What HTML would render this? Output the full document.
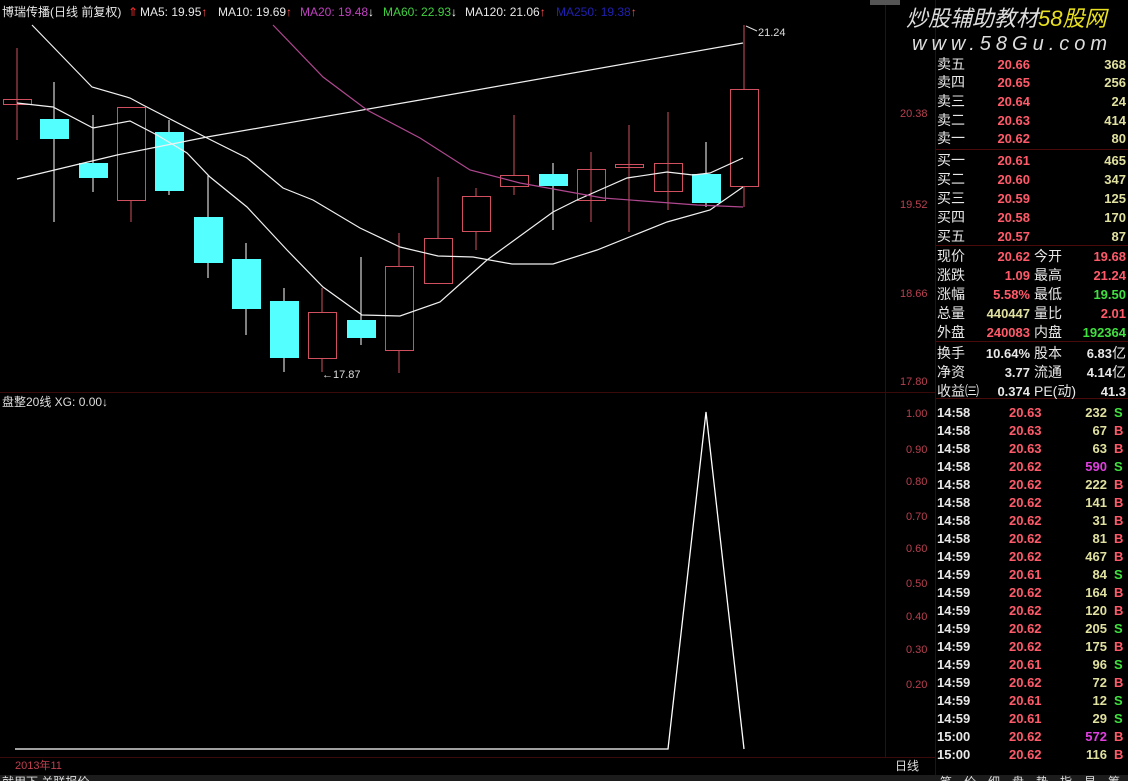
<!DOCTYPE html>
<html><head><meta charset="utf-8"><style>
html,body{margin:0;padding:0;background:#000;width:1128px;height:781px;overflow:hidden}
svg{display:block}
text{font-family:"Liberation Sans","Noto Sans CJK SC",sans-serif}
.r{fill:#ff5a6a}.w{fill:#e8e8e8}.y{fill:#e0e0a0}.g{fill:#40e040}.m{fill:#e040e0}.ax{fill:#b84050;font-size:11px}
</style></head><body>
<svg width="1128" height="781" xmlns="http://www.w3.org/2000/svg">
<rect width="1128" height="781" fill="#000"/>
<!-- frame lines -->
<line x1="885.5" y1="0" x2="885.5" y2="757" stroke="#3a0a0a"/>
<line x1="935.5" y1="0" x2="935.5" y2="781" stroke="#3a0a0a"/>
<line x1="0" y1="392.5" x2="935" y2="392.5" stroke="#3a0a0a"/>
<line x1="0" y1="757.5" x2="935" y2="757.5" stroke="#3a0a0a"/>
<rect x="870" y="0" width="30" height="5" fill="#555"/>
<!-- header -->
<g font-size="12">
<text x="2" y="16" class="w">博瑞传播(日线 前复权)</text>
<text x="128" y="16" fill="#ff3030">⇑</text>
<text x="140" y="16" class="w">MA5: 19.95<tspan fill="#ff5050">↑</tspan></text>
<text x="218" y="16" class="w">MA10: 19.69<tspan fill="#ff5050">↑</tspan></text>
<text x="300" y="16" fill="#c040c0">MA20: 19.48<tspan fill="#fff">↓</tspan></text>
<text x="383" y="16" fill="#40d040">MA60: 22.93<tspan fill="#fff">↓</tspan></text>
<text x="465" y="16" class="w">MA120: 21.06<tspan fill="#ff5050">↑</tspan></text>
<text x="556" y="16" fill="#2020b0">MA250: 19.38<tspan fill="#ff5050">↑</tspan></text>
</g>
<!-- axis labels -->
<text x="900" y="117" class="ax">20.38</text>
<text x="900" y="208" class="ax">19.52</text>
<text x="900" y="297" class="ax">18.66</text>
<text x="900" y="385" class="ax">17.80</text>
<!-- candles -->
<g stroke-width="1" shape-rendering="crispEdges">
<line x1="17" y1="48" x2="17" y2="140" stroke="#d05060"/><rect x="3.5" y="99.5" width="28" height="5" fill="none" stroke="#d05060"/>
<line x1="54" y1="82" x2="54" y2="222" stroke="#fff"/><rect x="40" y="119" width="29" height="20" fill="#54ffff"/>
<line x1="93" y1="115" x2="93" y2="192" stroke="#fff"/><rect x="79" y="163" width="29" height="15" fill="#54ffff"/>
<line x1="131" y1="200" x2="131" y2="222" stroke="#d05060"/><rect x="117.5" y="107.5" width="28" height="93" fill="none" stroke="#d05060"/>
<line x1="169" y1="120" x2="169" y2="195" stroke="#fff"/><rect x="155" y="132" width="29" height="59" fill="#54ffff"/>
<line x1="208" y1="175" x2="208" y2="278" stroke="#fff"/><rect x="194" y="217" width="29" height="46" fill="#54ffff"/>
<line x1="246" y1="243" x2="246" y2="335" stroke="#fff"/><rect x="232" y="259" width="29" height="50" fill="#54ffff"/>
<line x1="284" y1="288" x2="284" y2="372" stroke="#fff"/><rect x="270" y="301" width="29" height="57" fill="#54ffff"/>
<line x1="322" y1="288" x2="322" y2="312" stroke="#d05060"/><line x1="322" y1="358" x2="322" y2="372" stroke="#d05060"/><rect x="308.5" y="312.5" width="28" height="46" fill="none" stroke="#d05060"/>
<line x1="361" y1="257" x2="361" y2="345" stroke="#fff"/><rect x="347" y="320" width="29" height="18" fill="#54ffff"/>
<line x1="399" y1="233" x2="399" y2="373" stroke="#d05060"/><rect x="385.5" y="266.5" width="28" height="84" fill="#000" stroke="#d05060"/>
<line x1="438" y1="177" x2="438" y2="238" stroke="#d05060"/><rect x="424.5" y="238.5" width="28" height="45" fill="none" stroke="#d05060"/>
<line x1="476" y1="188" x2="476" y2="250" stroke="#d05060"/><rect x="462.5" y="196.5" width="28" height="35" fill="#000" stroke="#d05060"/>
<line x1="514" y1="115" x2="514" y2="195" stroke="#d05060"/><rect x="500.5" y="175.5" width="28" height="11" fill="#000" stroke="#d05060"/>
<line x1="553" y1="163" x2="553" y2="230" stroke="#fff"/><rect x="539" y="174" width="29" height="12" fill="#54ffff"/>
<line x1="591" y1="152" x2="591" y2="222" stroke="#d05060"/><rect x="577.5" y="169.5" width="28" height="31" fill="none" stroke="#d05060"/>
<line x1="629" y1="125" x2="629" y2="232" stroke="#d05060"/><rect x="615.5" y="164.5" width="28" height="3" fill="none" stroke="#d05060"/>
<line x1="668" y1="112" x2="668" y2="210" stroke="#d05060"/><rect x="654.5" y="163.5" width="28" height="28" fill="none" stroke="#d05060"/>
<line x1="706" y1="142" x2="706" y2="207" stroke="#fff"/><rect x="692" y="174" width="29" height="29" fill="#54ffff"/>
<line x1="744" y1="25" x2="744" y2="89" stroke="#d05060"/><line x1="744" y1="186" x2="744" y2="207" stroke="#d05060"/><rect x="730.5" y="89.5" width="28" height="97" fill="none" stroke="#d05060"/>
</g>
<!-- MA lines -->
<g fill="none" stroke-width="1.2">
<polyline stroke="#f0f0f0" points="17,179 117,155 207,137 420,100 743,43"/>
<polyline stroke="#f0f0f0" points="32,25 92,87 130,98 143,105 207,138 247,158 283,188 313,200 360,228 400,247 438,256 473,257 512,264 553,264 597,250 667,222 710,210 743,187"/>
<polyline stroke="#f0f0f0" points="17,103 53,107 93,128 130,121 157,135 187,153 210,177 247,207 287,250 323,287 362,315 400,316 440,302 487,260 553,212 577,200 627,178 667,172 693,175 710,173 743,158"/>
<polyline stroke="#b04890" points="273,25 323,77 367,110 420,138 470,170 520,183 603,198 697,205 743,207"/>
</g>
<text x="758" y="36" font-size="11" fill="#ddd">21.24</text>
<line x1="746" y1="26" x2="757" y2="31" stroke="#ddd"/>
<text x="322" y="378" font-size="11" fill="#ddd">←17.87</text>
<!-- lower panel -->
<text x="2" y="406" font-size="12" fill="#ddd">盘整20线 XG: 0.00↓</text>
<g class="ax">
<text x="906" y="417">1.00</text><text x="906" y="453">0.90</text><text x="906" y="485">0.80</text><text x="906" y="520">0.70</text><text x="906" y="552">0.60</text><text x="906" y="587">0.50</text><text x="906" y="620">0.40</text><text x="906" y="653">0.30</text><text x="906" y="688">0.20</text>
</g>
<polyline fill="none" stroke="#fff" stroke-width="1.3" points="15,749 668,749 706,412 744,749"/>
<text x="15" y="769" font-size="11" fill="#c04050">2013年11</text>
<text x="895" y="770" font-size="12" fill="#ddd">日线</text>
<rect x="0" y="775" width="1128" height="6" fill="#1c1c1c"/>
<text x="2" y="786" font-size="12" fill="#ddd">就用下 关联报价</text>
<text x="940" y="786" font-size="12" fill="#ddd" letter-spacing="12">笔价细盘势指星筹</text>
<!-- watermark -->
<text x="906" y="26" font-size="22" font-style="italic" fill="#ddd">炒股辅助教材<tspan fill="#e8e020">58股网</tspan></text>
<text x="912" y="50" font-size="20" font-style="italic" fill="#ddd" letter-spacing="5">www.58Gu.com</text>
<!-- order book -->
<g font-size="14">
<g class="w">
<text x="937" y="69">卖五</text><text x="937" y="87">卖四</text><text x="937" y="106">卖三</text><text x="937" y="125">卖二</text><text x="937" y="143">卖一</text>
<text x="937" y="165">买一</text><text x="937" y="184">买二</text><text x="937" y="203">买三</text><text x="937" y="222">买四</text><text x="937" y="241">买五</text>
</g>
<g class="r" text-anchor="end" font-weight="bold" font-size="13">
<text x="1030" y="69">20.66</text><text x="1030" y="87">20.65</text><text x="1030" y="106">20.64</text><text x="1030" y="125">20.63</text><text x="1030" y="143">20.62</text>
<text x="1030" y="165">20.61</text><text x="1030" y="184">20.60</text><text x="1030" y="203">20.59</text><text x="1030" y="222">20.58</text><text x="1030" y="241">20.57</text>
</g>
<g class="y" text-anchor="end" font-weight="bold" font-size="13">
<text x="1126" y="69">368</text><text x="1126" y="87">256</text><text x="1126" y="106">24</text><text x="1126" y="125">414</text><text x="1126" y="143">80</text>
<text x="1126" y="165">465</text><text x="1126" y="184">347</text><text x="1126" y="203">125</text><text x="1126" y="222">170</text><text x="1126" y="241">87</text>
</g>
<line x1="936" y1="149.5" x2="1128" y2="149.5" stroke="#4a0a0a"/>
<line x1="936" y1="245.5" x2="1128" y2="245.5" stroke="#4a0a0a"/>
<line x1="936" y1="341.5" x2="1128" y2="341.5" stroke="#4a0a0a"/>
<line x1="936" y1="398.5" x2="1128" y2="398.5" stroke="#4a0a0a"/>
<g class="w">
<text x="937" y="261">现价</text><text x="937" y="280">涨跌</text><text x="937" y="299">涨幅</text><text x="937" y="318">总量</text><text x="937" y="337">外盘</text>
<text x="937" y="358">换手</text><text x="937" y="377">净资</text><text x="937" y="396">收益㈢</text>
<text x="1034" y="261">今开</text><text x="1034" y="280">最高</text><text x="1034" y="299">最低</text><text x="1034" y="318">量比</text><text x="1034" y="337">内盘</text>
<text x="1034" y="358">股本</text><text x="1034" y="377">流通</text><text x="1034" y="396">PE(动)</text>
</g>
<g text-anchor="end" font-weight="bold" font-size="13">
<text x="1030" y="261" class="r">20.62</text><text x="1030" y="280" class="r">1.09</text><text x="1030" y="299" class="r">5.58%</text><text x="1030" y="318" class="y">440447</text><text x="1030" y="337" class="r">240083</text>
<text x="1030" y="358" class="w">10.64%</text><text x="1030" y="377" class="w">3.77</text><text x="1030" y="396" class="w">0.374</text>
<text x="1126" y="261" class="r">19.68</text><text x="1126" y="280" class="r">21.24</text><text x="1126" y="299" class="g">19.50</text><text x="1126" y="318" class="r">2.01</text><text x="1126" y="337" class="g">192364</text>
<text x="1112" y="358" class="w">6.83</text><text x="1112" y="377" class="w">4.14</text><text x="1126" y="396" class="w">41.3</text>
</g>
<text x="1112" y="358" class="w">亿</text><text x="1112" y="377" class="w">亿</text>
</g>
<!-- ticks -->
<g font-size="13" font-weight="bold">
<g class="w">
<text x="937" y="417">14:58</text><text x="937" y="435">14:58</text><text x="937" y="453">14:58</text><text x="937" y="471">14:58</text><text x="937" y="489">14:58</text><text x="937" y="507">14:58</text><text x="937" y="525">14:58</text><text x="937" y="543">14:58</text><text x="937" y="561">14:59</text><text x="937" y="579">14:59</text><text x="937" y="597">14:59</text><text x="937" y="615">14:59</text><text x="937" y="633">14:59</text><text x="937" y="651">14:59</text><text x="937" y="669">14:59</text><text x="937" y="687">14:59</text><text x="937" y="705">14:59</text><text x="937" y="723">14:59</text><text x="937" y="741">15:00</text><text x="937" y="759">15:00</text>
</g>
<g class="r">
<text x="1009" y="417">20.63</text><text x="1009" y="435">20.63</text><text x="1009" y="453">20.63</text><text x="1009" y="471">20.62</text><text x="1009" y="489">20.62</text><text x="1009" y="507">20.62</text><text x="1009" y="525">20.62</text><text x="1009" y="543">20.62</text><text x="1009" y="561">20.62</text><text x="1009" y="579">20.61</text><text x="1009" y="597">20.62</text><text x="1009" y="615">20.62</text><text x="1009" y="633">20.62</text><text x="1009" y="651">20.62</text><text x="1009" y="669">20.61</text><text x="1009" y="687">20.62</text><text x="1009" y="705">20.61</text><text x="1009" y="723">20.61</text><text x="1009" y="741">20.62</text><text x="1009" y="759">20.62</text>
</g>
<g class="y" text-anchor="end">
<text x="1107" y="417">232</text><text x="1107" y="435">67</text><text x="1107" y="453">63</text><text x="1107" y="471" class="m">590</text><text x="1107" y="489">222</text><text x="1107" y="507">141</text><text x="1107" y="525">31</text><text x="1107" y="543">81</text><text x="1107" y="561">467</text><text x="1107" y="579">84</text><text x="1107" y="597">164</text><text x="1107" y="615">120</text><text x="1107" y="633">205</text><text x="1107" y="651">175</text><text x="1107" y="669">96</text><text x="1107" y="687">72</text><text x="1107" y="705">12</text><text x="1107" y="723">29</text><text x="1107" y="741" class="m">572</text><text x="1107" y="759">116</text>
</g>
<g>
<text x="1114" y="417" class="g">S</text><text x="1114" y="435" class="r">B</text><text x="1114" y="453" class="r">B</text><text x="1114" y="471" class="g">S</text><text x="1114" y="489" class="r">B</text><text x="1114" y="507" class="r">B</text><text x="1114" y="525" class="r">B</text><text x="1114" y="543" class="r">B</text><text x="1114" y="561" class="r">B</text><text x="1114" y="579" class="g">S</text><text x="1114" y="597" class="r">B</text><text x="1114" y="615" class="r">B</text><text x="1114" y="633" class="g">S</text><text x="1114" y="651" class="r">B</text><text x="1114" y="669" class="g">S</text><text x="1114" y="687" class="r">B</text><text x="1114" y="705" class="g">S</text><text x="1114" y="723" class="g">S</text><text x="1114" y="741" class="r">B</text><text x="1114" y="759" class="r">B</text>
</g>
</g>
</svg>
</body></html>
